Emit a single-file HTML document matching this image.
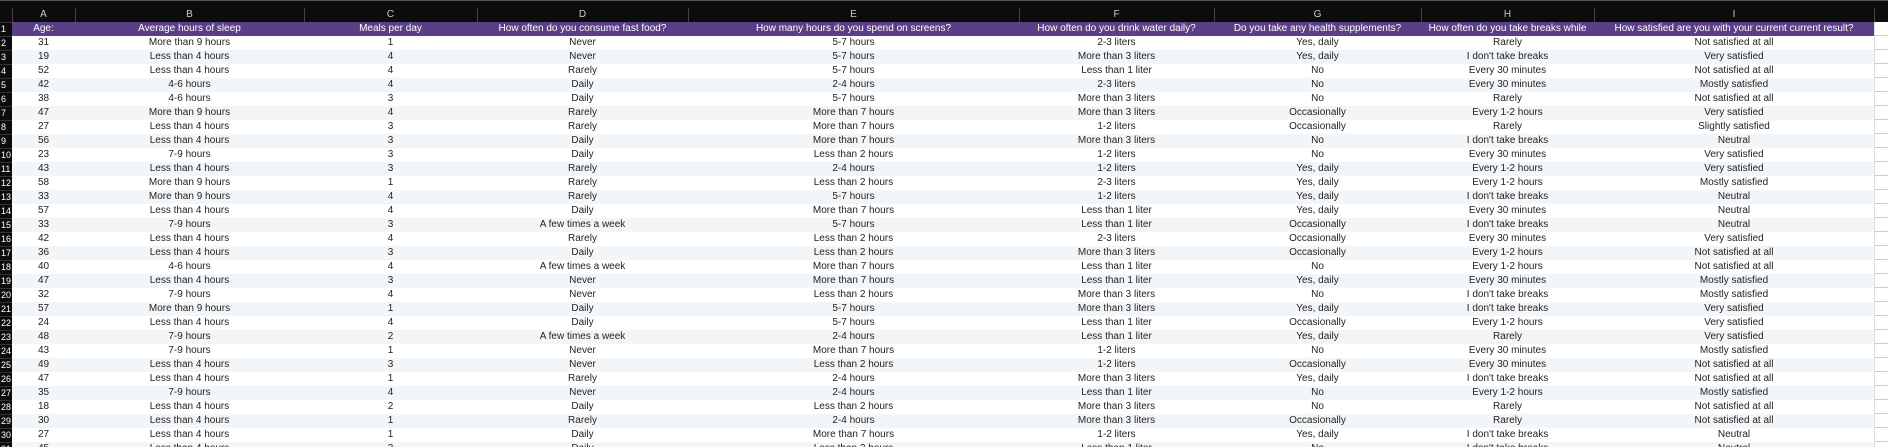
<!DOCTYPE html>
<html><head><meta charset="utf-8"><style>
html,body{margin:0;padding:0;background:#0c0c0c;width:1888px;height:447px;overflow:hidden}
body{position:relative;font-family:"Liberation Sans","DejaVu Sans",sans-serif;font-size:10px}
.top{position:absolute;left:0;top:0;width:1888px;height:3px;border-top:1px solid #555}
table{position:absolute;left:0;top:8px;border-collapse:collapse;border-spacing:0;table-layout:fixed;width:1888px}
tr{height:14px}
td{height:14px;max-height:14px;box-sizing:border-box;padding:0;border:none;text-align:center;white-space:nowrap;overflow:hidden;line-height:14px;color:#222}
tr.hd td{background:#0c0c0c;color:#ccc;box-shadow:inset 1px 0 0 #444}
tr.hd td:first-child{box-shadow:none}
tr.p td{background:#5a3e86;color:#fff}
tr.w td{background:#fff}
tr.g td{background:#f3f6f9}
td.n{background:#0c0c0c!important;color:#fff!important;text-align:left;padding-left:1px;box-shadow:inset 0 1px 0 #333;font-size:9px}
td.x{background:#fff!important;box-shadow:inset 1px 0 0 #ddd,inset 0 -1px 0 #ccc}
tr.hd td.x{background:#0c0c0c!important;box-shadow:inset 1px 0 0 #444}
</style></head><body>
<div class="top"></div>
<table>
<colgroup><col style="width:12px"><col style="width:63px"><col style="width:229px"><col style="width:173px"><col style="width:211px"><col style="width:331px"><col style="width:195px"><col style="width:207px"><col style="width:173px"><col style="width:280px"><col style="width:14px"></colgroup>
<tr class="hd"><td class="n" style="box-shadow:none"></td><td>A</td><td>B</td><td>C</td><td>D</td><td>E</td><td>F</td><td>G</td><td>H</td><td>I</td><td class="x"></td></tr>
<tr class="p"><td class="n">1</td><td>Age:</td><td>Average hours of sleep</td><td>Meals per day</td><td>How often do you consume fast food?</td><td>How many hours do you spend on screens?</td><td>How often do you drink water daily?</td><td>Do you take any health supplements?</td><td>How often do you take breaks while</td><td>How satisfied are you with your current current result?</td><td class="x"></td></tr>
<tr class="w"><td class="n">2</td><td>31</td><td>More than 9 hours</td><td>1</td><td>Never</td><td>5-7 hours</td><td>2-3 liters</td><td>Yes, daily</td><td>Rarely</td><td>Not satisfied at all</td><td class="x"></td></tr>
<tr class="g"><td class="n">3</td><td>19</td><td>Less than 4 hours</td><td>4</td><td>Never</td><td>5-7 hours</td><td>More than 3 liters</td><td>Yes, daily</td><td>I don't take breaks</td><td>Very satisfied</td><td class="x"></td></tr>
<tr class="w"><td class="n">4</td><td>52</td><td>Less than 4 hours</td><td>4</td><td>Rarely</td><td>5-7 hours</td><td>Less than 1 liter</td><td>No</td><td>Every 30 minutes</td><td>Not satisfied at all</td><td class="x"></td></tr>
<tr class="g"><td class="n">5</td><td>42</td><td>4-6 hours</td><td>4</td><td>Daily</td><td>2-4 hours</td><td>2-3 liters</td><td>No</td><td>Every 30 minutes</td><td>Mostly satisfied</td><td class="x"></td></tr>
<tr class="w"><td class="n">6</td><td>38</td><td>4-6 hours</td><td>3</td><td>Daily</td><td>5-7 hours</td><td>More than 3 liters</td><td>No</td><td>Rarely</td><td>Not satisfied at all</td><td class="x"></td></tr>
<tr class="g"><td class="n">7</td><td>47</td><td>More than 9 hours</td><td>4</td><td>Rarely</td><td>More than 7 hours</td><td>More than 3 liters</td><td>Occasionally</td><td>Every 1-2 hours</td><td>Very satisfied</td><td class="x"></td></tr>
<tr class="w"><td class="n">8</td><td>27</td><td>Less than 4 hours</td><td>3</td><td>Rarely</td><td>More than 7 hours</td><td>1-2 liters</td><td>Occasionally</td><td>Rarely</td><td>Slightly satisfied</td><td class="x"></td></tr>
<tr class="g"><td class="n">9</td><td>56</td><td>Less than 4 hours</td><td>3</td><td>Daily</td><td>More than 7 hours</td><td>More than 3 liters</td><td>No</td><td>I don't take breaks</td><td>Neutral</td><td class="x"></td></tr>
<tr class="w"><td class="n">10</td><td>23</td><td>7-9 hours</td><td>3</td><td>Daily</td><td>Less than 2 hours</td><td>1-2 liters</td><td>No</td><td>Every 30 minutes</td><td>Very satisfied</td><td class="x"></td></tr>
<tr class="g"><td class="n">11</td><td>43</td><td>Less than 4 hours</td><td>3</td><td>Rarely</td><td>2-4 hours</td><td>1-2 liters</td><td>Yes, daily</td><td>Every 1-2 hours</td><td>Very satisfied</td><td class="x"></td></tr>
<tr class="w"><td class="n">12</td><td>58</td><td>More than 9 hours</td><td>1</td><td>Rarely</td><td>Less than 2 hours</td><td>2-3 liters</td><td>Yes, daily</td><td>Every 1-2 hours</td><td>Mostly satisfied</td><td class="x"></td></tr>
<tr class="g"><td class="n">13</td><td>33</td><td>More than 9 hours</td><td>4</td><td>Rarely</td><td>5-7 hours</td><td>1-2 liters</td><td>Yes, daily</td><td>I don't take breaks</td><td>Neutral</td><td class="x"></td></tr>
<tr class="w"><td class="n">14</td><td>57</td><td>Less than 4 hours</td><td>4</td><td>Daily</td><td>More than 7 hours</td><td>Less than 1 liter</td><td>Yes, daily</td><td>Every 30 minutes</td><td>Neutral</td><td class="x"></td></tr>
<tr class="g"><td class="n">15</td><td>33</td><td>7-9 hours</td><td>3</td><td>A few times a week</td><td>5-7 hours</td><td>Less than 1 liter</td><td>Occasionally</td><td>I don't take breaks</td><td>Neutral</td><td class="x"></td></tr>
<tr class="w"><td class="n">16</td><td>42</td><td>Less than 4 hours</td><td>4</td><td>Rarely</td><td>Less than 2 hours</td><td>2-3 liters</td><td>Occasionally</td><td>Every 30 minutes</td><td>Very satisfied</td><td class="x"></td></tr>
<tr class="g"><td class="n">17</td><td>36</td><td>Less than 4 hours</td><td>3</td><td>Daily</td><td>Less than 2 hours</td><td>More than 3 liters</td><td>Occasionally</td><td>Every 1-2 hours</td><td>Not satisfied at all</td><td class="x"></td></tr>
<tr class="w"><td class="n">18</td><td>40</td><td>4-6 hours</td><td>4</td><td>A few times a week</td><td>More than 7 hours</td><td>Less than 1 liter</td><td>No</td><td>Every 1-2 hours</td><td>Not satisfied at all</td><td class="x"></td></tr>
<tr class="g"><td class="n">19</td><td>47</td><td>Less than 4 hours</td><td>3</td><td>Never</td><td>More than 7 hours</td><td>Less than 1 liter</td><td>Yes, daily</td><td>Every 30 minutes</td><td>Mostly satisfied</td><td class="x"></td></tr>
<tr class="w"><td class="n">20</td><td>32</td><td>7-9 hours</td><td>4</td><td>Never</td><td>Less than 2 hours</td><td>More than 3 liters</td><td>No</td><td>I don't take breaks</td><td>Mostly satisfied</td><td class="x"></td></tr>
<tr class="g"><td class="n">21</td><td>57</td><td>More than 9 hours</td><td>1</td><td>Daily</td><td>5-7 hours</td><td>More than 3 liters</td><td>Yes, daily</td><td>I don't take breaks</td><td>Very satisfied</td><td class="x"></td></tr>
<tr class="w"><td class="n">22</td><td>24</td><td>Less than 4 hours</td><td>4</td><td>Daily</td><td>5-7 hours</td><td>Less than 1 liter</td><td>Occasionally</td><td>Every 1-2 hours</td><td>Very satisfied</td><td class="x"></td></tr>
<tr class="g"><td class="n">23</td><td>48</td><td>7-9 hours</td><td>2</td><td>A few times a week</td><td>2-4 hours</td><td>Less than 1 liter</td><td>Yes, daily</td><td>Rarely</td><td>Very satisfied</td><td class="x"></td></tr>
<tr class="w"><td class="n">24</td><td>43</td><td>7-9 hours</td><td>1</td><td>Never</td><td>More than 7 hours</td><td>1-2 liters</td><td>No</td><td>Every 30 minutes</td><td>Mostly satisfied</td><td class="x"></td></tr>
<tr class="g"><td class="n">25</td><td>49</td><td>Less than 4 hours</td><td>3</td><td>Never</td><td>Less than 2 hours</td><td>1-2 liters</td><td>Occasionally</td><td>Every 30 minutes</td><td>Not satisfied at all</td><td class="x"></td></tr>
<tr class="w"><td class="n">26</td><td>47</td><td>Less than 4 hours</td><td>1</td><td>Rarely</td><td>2-4 hours</td><td>More than 3 liters</td><td>Yes, daily</td><td>I don't take breaks</td><td>Not satisfied at all</td><td class="x"></td></tr>
<tr class="g"><td class="n">27</td><td>35</td><td>7-9 hours</td><td>4</td><td>Never</td><td>2-4 hours</td><td>Less than 1 liter</td><td>No</td><td>Every 1-2 hours</td><td>Mostly satisfied</td><td class="x"></td></tr>
<tr class="w"><td class="n">28</td><td>18</td><td>Less than 4 hours</td><td>2</td><td>Daily</td><td>Less than 2 hours</td><td>More than 3 liters</td><td>No</td><td>Rarely</td><td>Not satisfied at all</td><td class="x"></td></tr>
<tr class="g"><td class="n">29</td><td>30</td><td>Less than 4 hours</td><td>1</td><td>Rarely</td><td>2-4 hours</td><td>More than 3 liters</td><td>Occasionally</td><td>Rarely</td><td>Not satisfied at all</td><td class="x"></td></tr>
<tr class="w"><td class="n">30</td><td>27</td><td>Less than 4 hours</td><td>1</td><td>Daily</td><td>More than 7 hours</td><td>1-2 liters</td><td>Yes, daily</td><td>I don't take breaks</td><td>Neutral</td><td class="x"></td></tr>
<tr class="g"><td class="n">31</td><td>45</td><td>Less than 4 hours</td><td>3</td><td>Daily</td><td>Less than 2 hours</td><td>Less than 1 liter</td><td>No</td><td>I don't take breaks</td><td>Neutral</td><td class="x"></td></tr>
</table>
</body></html>
